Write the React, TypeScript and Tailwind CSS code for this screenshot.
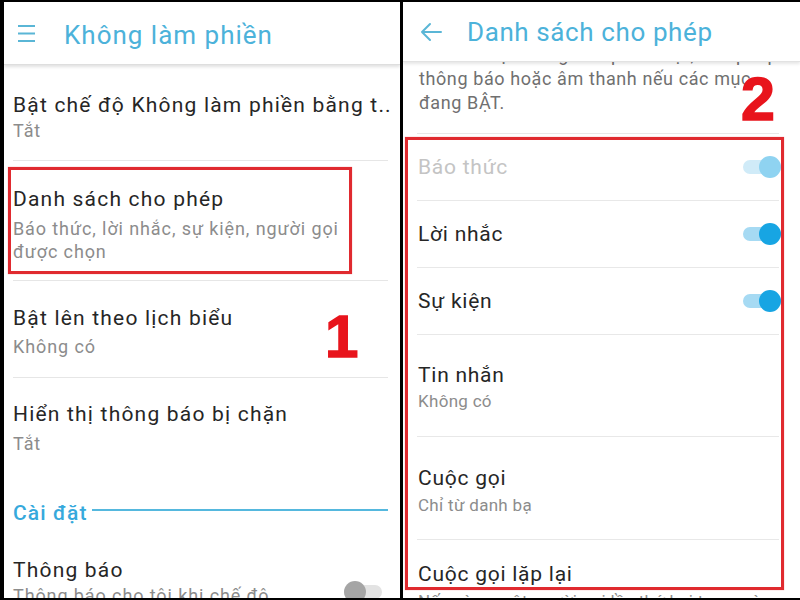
type ToggleState = 'on' | 'disabled' | 'off'

function Toggle({ state }: { state: ToggleState }) {
  const track =
    state === 'on' ? 'bg-[#a6daf3]' : state === 'disabled' ? 'bg-[#d0ebf8]' : 'bg-[#e3e3e3]'
  const knob =
    state === 'on' ? 'bg-[#17a5e3]' : state === 'disabled' ? 'bg-[#8fd3f1]' : 'bg-[#a5a5a5]'
  return (
    <div className="relative flex h-[22px] w-[38px] shrink-0 items-center">
      <div className={`h-[14px] w-full rounded-full ${track}`} />
      <div
        className={`absolute top-0 h-[22px] w-[22px] rounded-full ${knob} ${
          state === 'off' ? 'left-0' : 'right-0'
        }`}
      />
    </div>
  )
}

function SwitchRow({ label, state }: { label: string; state: ToggleState }) {
  return (
    <div className="flex h-[67px] items-center justify-between border-b border-[#e8e8e8]">
      <span
        className={`pl-[1px] text-[21px] leading-[26px] tracking-[0.75px] ${
          state === 'disabled' ? 'text-[#c4c4c4]' : 'text-[#262626]'
        }`}
      >
        {label}
      </span>
      <div className="-mr-[2px]">
        <Toggle state={state} />
      </div>
    </div>
  )
}

export default function App() {
  return (
    <div className="flex h-[600px] w-[800px] overflow-hidden bg-black pb-[2px] pl-[4px] pt-[2px] font-['Roboto',sans-serif]">
      {/* left phone */}
      <div className="relative w-[396px] overflow-hidden bg-white">
        <div className="relative z-10 flex h-[63px] items-center border-b border-[#dedede] bg-white pl-[14px] pt-[4px] shadow-[0_2px_3px_rgba(0,0,0,0.12)]">
          <svg width="17" height="17" viewBox="0 0 17 17" className="-mt-[4px] shrink-0">
            <path d="M0 1h17M0 8.5h17M0 16h17" stroke="#5ab6d6" strokeWidth="2" />
          </svg>
          <span className="ml-[29px] text-[26px] leading-[32px] tracking-[1px] text-[#4cb2da]">
            Không làm phiền
          </span>
        </div>

        <div className="pl-[9px] pr-[12px]">
          <div className="border-b border-[#e6e6e6] pb-[16px] pt-[27px]">
            <div className="whitespace-nowrap text-[21px] leading-[26px] tracking-[1.2px] text-[#262626]">
              Bật chế độ Không làm phiền bằng t..
            </div>
            <div className="text-[18px] leading-[26px] tracking-[0.9px] text-[#8c8c8c]">Tắt</div>
          </div>

          <div className="border-b border-[#e6e6e6] pb-[17px] pt-[25px]">
            <div className="text-[21px] leading-[26px] tracking-[1.2px] text-[#262626]">
              Danh sách cho phép
            </div>
            <div className="mt-[5px] text-[18px] leading-[23px] tracking-[0.9px] text-[#8c8c8c]">
              Báo thức, lời nhắc, sự kiện, người gọi
              <br />
              được chọn
            </div>
          </div>

          <div className="border-b border-[#e6e6e6] pb-[17px] pt-[24px]">
            <div className="text-[21px] leading-[26px] tracking-[1.2px] text-[#262626]">
              Bật lên theo lịch biểu
            </div>
            <div className="mt-[3px] text-[18px] leading-[26px] tracking-[0.9px] text-[#8c8c8c]">
              Không có
            </div>
          </div>

          <div className="pt-[23px]">
            <div className="text-[21px] leading-[26px] tracking-[1.2px] text-[#262626]">
              Hiển thị thông báo bị chặn
            </div>
            <div className="mt-[4px] text-[18px] leading-[26px] tracking-[0.9px] text-[#8c8c8c]">
              Tắt
            </div>
          </div>

          <div className="mt-[43px] flex items-center">
            <span className="text-[21px] font-medium leading-[26px] tracking-[1.1px] text-[#36a9dc]">
              Cài đặt
            </span>
            <div className="mb-[6px] ml-[4px] h-[2px] flex-1 bg-[#55b8de]" />
          </div>

          <div className="mt-[31px] flex items-start justify-between">
            <div>
              <div className="text-[21px] leading-[26px] tracking-[1.2px] text-[#262626]">
                Thông báo
              </div>
              <div className="whitespace-nowrap text-[18px] leading-[26px] tracking-[0.9px] text-[#8c8c8c]">
                Thông báo cho tôi khi chế độ
              </div>
            </div>
            <div className="mr-[6px] mt-[24px]">
              <Toggle state="off" />
            </div>
          </div>
        </div>

        <div className="absolute left-[4px] top-[165px] h-[107px] w-[344px] border-[3px] border-[#e02a2f] shadow-[0_0_1px_rgba(224,42,47,0.5)]" />
        <span className="absolute left-[321px] top-[305px] font-['Liberation_Sans',sans-serif] text-[60px] font-bold leading-none text-[#e8141c] [-webkit-text-stroke:1.5px_#e8141c]">
          1
        </span>
      </div>

      {/* divider */}
      <div className="w-[3px] shrink-0" />

      {/* right phone */}
      <div className="relative flex-1 overflow-hidden bg-white">
        <div className="relative z-10 flex h-[60px] items-center border-b border-[#e2e2e2] bg-white pl-[17px] shadow-[0_2px_3px_rgba(0,0,0,0.1)]">
          <svg width="22" height="20" viewBox="0 0 22 20" className="shrink-0">
            <path
              d="M21 10H2M10 2L2 10l8 8"
              fill="none"
              stroke="#5ab6d6"
              strokeWidth="2"
              strokeLinecap="round"
              strokeLinejoin="round"
            />
          </svg>
          <span className="ml-[25px] text-[26px] leading-[32px] tracking-[0.6px] text-[#4cb2da]">
            Danh sách cho phép
          </span>
        </div>

        <div className="-mt-[19px] pl-[14px] pr-[21px]">
          <div className="border-b border-[#e8e8e8] pb-[18px] pl-[2px]">
            <p className="whitespace-nowrap text-[18px] leading-[24px] tracking-[0.6px] text-[#707070]">
              Khi chế độ Không làm phiền bật, cho phép
              <br />
              thông báo hoặc âm thanh nếu các mục
              <br />
              đang BẬT.
            </p>
          </div>

          <SwitchRow label="Báo thức" state="disabled" />
          <SwitchRow label="Lời nhắc" state="on" />
          <SwitchRow label="Sự kiện" state="on" />

          <div className="border-b border-[#e8e8e8] pb-[23px] pl-[1px] pt-[27px]">
            <div className="text-[21px] leading-[26px] tracking-[0.75px] text-[#262626]">Tin nhắn</div>
            <div className="mt-[1px] text-[17px] leading-[24px] tracking-[0.3px] text-[#8c8c8c]">
              Không có
            </div>
          </div>

          <div className="border-b border-[#e8e8e8] pb-[22px] pl-[1px] pt-[28px]">
            <div className="text-[21px] leading-[26px] tracking-[0.75px] text-[#262626]">Cuộc gọi</div>
            <div className="mt-[2px] text-[17px] leading-[24px] tracking-[0.3px] text-[#8c8c8c]">
              Chỉ từ danh bạ
            </div>
          </div>

          <div className="pl-[1px] pt-[21px]">
            <div className="text-[21px] leading-[26px] tracking-[0.75px] text-[#262626]">
              Cuộc gọi lặp lại
            </div>
            <div className="mt-[2px] whitespace-nowrap text-[17px] leading-[24px] tracking-[0.3px] text-[#8c8c8c]">
              Nếu cùng một người gọi lần thứ hai trong vòng
            </div>
          </div>
        </div>

        <div className="absolute left-[2px] top-[135px] h-[453px] w-[379px] border-[3px] border-[#e02a2f] shadow-[0_0_1px_rgba(224,42,47,0.5)]" />
        <span className="absolute left-[338px] top-[67px] font-['Liberation_Sans',sans-serif] text-[61px] font-bold leading-none text-[#e8141c] [-webkit-text-stroke:1.5px_#e8141c]">
          2
        </span>
      </div>
    </div>
  )
}
